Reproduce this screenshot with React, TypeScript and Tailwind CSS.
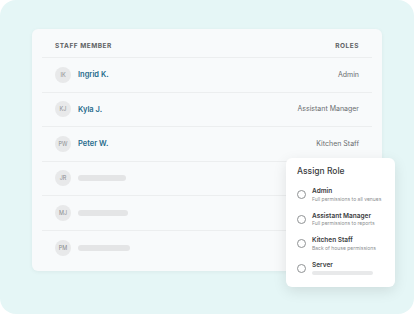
import React from 'react';

interface StaffRow {
  initials: string;
  name?: string;
  role?: string;
  barWidth?: number;
}

const rows: StaffRow[] = [
  { initials: 'IK', name: 'Ingrid K.', role: 'Admin' },
  { initials: 'KJ', name: 'Kyla J.', role: 'Assistant Manager' },
  { initials: 'PW', name: 'Peter W.', role: 'Kitchen Staff' },
  { initials: 'JR', barWidth: 48 },
  { initials: 'MJ', barWidth: 50 },
  { initials: 'PM', barWidth: 52 },
];

const roleOptions = [
  { title: 'Admin', desc: 'Full permissions to all venues' },
  { title: 'Assistant Manager', desc: 'Full permissions to reports' },
  { title: 'Kitchen Staff', desc: 'Back of house permissions' },
  { title: 'Server', desc: '' },
];

const App: React.FC = () => {
  return (
    <div className="w-[414px] h-[314px] bg-white" style={{ fontFamily: 'Inter, "Noto Sans", sans-serif' }}>
      <div className="relative w-[414px] h-[314px] rounded-[16px] bg-[#e5f6f6] pt-[29px] pl-[32px]">
        <div className="w-[350px] h-[242px] rounded-[6px] bg-[#f8fafb] shadow-[0_1px_4px_rgba(0,0,0,0.05)] px-[10px]">
          <div className="h-[29px] px-[13px] flex items-center justify-between border-b border-[#eceeef] pt-[8px]">
            <span className="text-[6.5px] font-bold tracking-[0.08em] text-[#5e6163]">STAFF MEMBER</span>
            <span className="text-[6.5px] font-bold tracking-[0.08em] text-[#5e6163]">ROLES</span>
          </div>
          {rows.map((r, i) => (
            <div
              key={r.initials}
              className={`h-[34.5px] px-[13px] flex items-center justify-between ${i < rows.length - 1 ? 'border-b border-[#eceeef]' : ''}`}
            >
              <div className="flex items-center gap-[7px]">
                <div className="w-[16px] h-[16px] rounded-full bg-[#e8e9ea] flex items-center justify-center text-[5.5px] text-[#8a8c8e]">
                  {r.initials}
                </div>
                {r.name ? (
                  <span className="text-[7.5px] font-semibold text-[#1f6b8c]">{r.name}</span>
                ) : (
                  <div className="h-[6px] rounded-full bg-[#e4e5e6]" style={{ width: r.barWidth }} />
                )}
              </div>
              {r.role && <span className="text-[7px] text-[#6a6d70]">{r.role}</span>}
            </div>
          ))}
        </div>

        <div className="absolute left-[286px] top-[158px] w-[109px] h-[129px] rounded-[6px] bg-white shadow-[0_4px_14px_rgba(0,0,0,0.10)] px-[11px] pt-[9px]">
          <div className="text-[8.5px] font-medium text-[#3a3c3e] leading-none mb-[11px]">Assign Role</div>
          <div className="flex flex-col gap-[8px]">
            {roleOptions.map((o) => (
              <div key={o.title} className="flex items-center gap-[6px] h-[16.5px]">
                <div className="w-[9px] h-[9px] rounded-full border border-[#8f9294] bg-white shrink-0" />
                <div className="flex flex-col gap-[2px]">
                  <span className="text-[6.5px] font-semibold text-[#3a3c3e] leading-none">{o.title}</span>
                  {o.desc ? (
                    <span className="text-[5px] text-[#8b8e90] leading-none">{o.desc}</span>
                  ) : (
                    <div className="w-[61px] h-[4px] rounded-full bg-[#e8e9ea]" />
                  )}
                </div>
              </div>
            ))}
          </div>
        </div>
      </div>
    </div>
  );
};

export default App;
